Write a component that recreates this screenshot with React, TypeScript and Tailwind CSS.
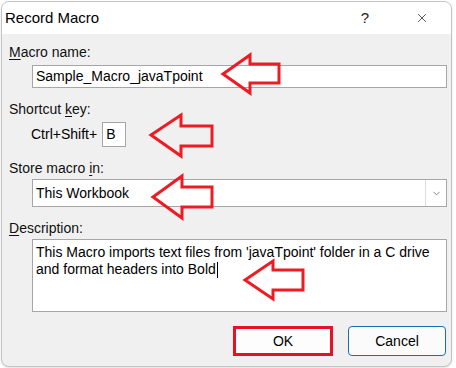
import { X, ChevronDown } from "lucide-react"

function Label({ pre, u, post }: { pre?: string; u: string; post: string }) {
  return (
    <div className="pl-[7px] h-[16px] leading-[16px] text-[14px] text-[#111]">
      {pre}
      <span className="underline underline-offset-2">{u}</span>
      {post}
    </div>
  )
}

function Arrow({ d }: { d: string }) {
  return <polygon points={d} fill="none" stroke="#ed1c24" strokeWidth="3" strokeLinejoin="miter" />
}

export default function App() {
  return (
    <div
      className="w-[456px] h-[368px] bg-white p-[1px] relative"
      style={{ fontFamily: '"Liberation Sans", Arial, sans-serif' }}
    >
      <div className="w-[451px] h-[366px] border border-[#c4c4c4] rounded-[8px] overflow-hidden bg-[#f0f0f0] flex flex-col shadow-sm">
        <div className="h-[32px] bg-white flex items-center shrink-0">
          <span className="pl-[3px] text-[15px] text-black">Record Macro</span>
          <span className="ml-auto text-[15px] text-[#222] mr-[46px]">?</span>
          <X className="w-[14px] h-[14px] mr-[22px] text-[#222]" strokeWidth={1.3} />
        </div>

        <div className="mt-[10px]">
          <Label u="M" post="acro name:" />
        </div>
        <div className="ml-[30px] mt-[5px] w-[415px] h-[23px] bg-white border border-[#a6a6a6] flex items-center pl-[3px] text-[14px] text-black">
          Sample_Macro_javaTpoint
        </div>

        <div className="mt-[13px]">
          <Label pre="Shortcut " u="k" post="ey:" />
        </div>
        <div className="mt-[5px] flex items-center h-[25px] pl-[29px] text-[14px] text-black">
          <span>Ctrl+Shift+</span>
          <div className="ml-[5px] w-[24px] h-[25px] bg-white border border-[#a6a6a6] flex items-center pl-[3px]">B</div>
        </div>

        <div className="mt-[13px]">
          <Label pre="Store macro " u="i" post="n:" />
        </div>
        <div className="ml-[30px] mt-[3px] w-[415px] h-[28px] bg-white border border-[#a6a6a6] flex items-center text-[14px] text-black">
          <span className="pl-[3px]">This Workbook</span>
          <div className="ml-auto w-[21px] h-full border-l border-[#dcdcdc] flex items-center justify-center">
            <ChevronDown className="w-[11px] h-[11px] text-[#555]" strokeWidth={1.5} />
          </div>
        </div>

        <div className="mt-[13px]">
          <Label u="D" post="escription:" />
        </div>
        <div className="ml-[30px] mt-[3px] w-[415px] h-[73px] bg-white border border-[#a6a6a6] pl-[3px] pt-[4px] text-[14px] leading-[17px] text-black whitespace-nowrap">
          <div>This Macro imports text files from 'javaTpoint' folder in a C drive</div>
          <div className="flex items-center">
            and format headers into Bold
            <span className="inline-block w-px h-[16px] bg-black ml-[1px]" />
          </div>
        </div>

        <div className="mt-[14px] flex gap-[15px] pl-[231px]">
          <button className="w-[100px] h-[30px] bg-[#fdfdfd] border-[3px] border-[#e81123] text-[14px] text-black">
            OK
          </button>
          <button className="w-[98px] h-[30px] bg-[#fbfbfb] border border-[#1f6bb5] rounded-[4px] text-[14px] text-black">
            Cancel
          </button>
        </div>
      </div>

      <svg className="absolute left-0 top-0 pointer-events-none" width="456" height="368">
        <Arrow d="223,74 250,55 250,64 279,64 279,83 250,83 250,93" />
        <Arrow d="151,135 181,115 181,126 212,126 212,146 181,146 181,156" />
        <Arrow d="153,197 182,176 182,187 212,187 212,207 182,207 182,218" />
        <Arrow d="245,280 273,261 273,270 303,270 303,290 273,290 273,299" />
      </svg>
    </div>
  )
}
